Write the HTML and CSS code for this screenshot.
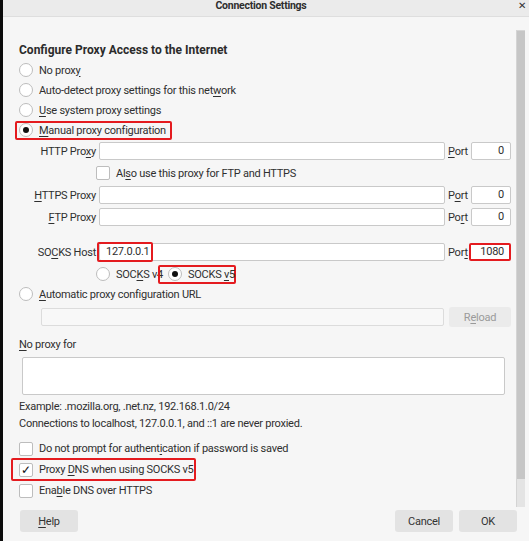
FILE: index.html
```html
<!DOCTYPE html>
<html>
<head lang="en">
    <meta charset="UTF-8">
    <title>Connection Settings</title>
    <link rel="stylesheet" href="styles.css">
</head>
<body>
<div class="screen">
    <div class="edge"></div>
    <div class="dialog">
        <div class="titlebar">
            <span class="title">Connection Settings</span>
            <span class="close">&#x2715;</span>
        </div>
        <div class="scroller">
            <div class="pane">
                <h1>Configure Proxy Access to the Internet</h1>
                <div class="choices">
                    <div class="opt"><span class="radio"></span><span>No prox<u>y</u></span></div>
                    <div class="opt"><span class="radio"></span><span>Auto-detect proxy settings for this net<u>w</u>ork</span></div>
                    <div class="opt"><span class="radio"></span><span><u>U</u>se system proxy settings</span></div>
                    <div class="opt"><span class="mark mark-manual"><span class="radio on"></span><span><u>M</u>anual proxy configuration</span></span></div>
                </div>

                <!-- host / port grid for the manual setup -->
                <div class="manual">
                    <span class="lbl">HTTP Pro<u>x</u>y</span>
                    <span class="field"></span>
                    <span class="plbl"><u>P</u>ort</span>
                    <span class="field num">0</span>

                    <div class="opt also"><span class="check"></span><span>Al<u>s</u>o use this proxy for FTP and HTTPS</span></div>

                    <span class="lbl"><u>H</u>TTPS Proxy</span>
                    <span class="field"></span>
                    <span class="plbl">P<u>o</u>rt</span>
                    <span class="field num">0</span>

                    <span class="lbl"><u>F</u>TP Proxy</span>
                    <span class="field"></span>
                    <span class="plbl">Po<u>r</u>t</span>
                    <span class="field num">0</span>

                    <div class="gap"></div>

                    <span class="lbl">SO<u>C</u>KS Host</span>
                    <span class="field host"><span class="mark mark-host"></span>127.0.0.1</span>
                    <span class="plbl">Por<u>t</u></span>
                    <span class="field num marked">1080</span>

                    <div class="versions">
                        <div class="opt v4"><span class="radio"></span><span>SOC<u>K</u>S v4</span></div>
                        <div class="opt"><span class="mark mark-v5"><span class="radio on"></span><span>SOCKS <u>v</u>5</span></span></div>
                    </div>
                </div>

                <div class="opt auto"><span class="radio"></span><span><u>A</u>utomatic proxy configuration URL</span></div>
                <div class="url-row">
                    <span class="field off"></span>
                    <span class="btn off">R<u>e</u>load</span>
                </div>

                <div class="noproxy"><u>N</u>o proxy for</div>
                <div class="area"></div>
                <p class="hint first">Example: .mozilla.org, .net.nz, 192.168.1.0/24</p>
                <p class="hint">Connections to localhost, 127.0.0.1, and ::1 are never proxied.</p>

                <div class="checks">
                    <div class="opt"><span class="check"></span><span>Do not prompt for authent<u>i</u>cation if password is saved</span></div>
                    <div class="opt"><span class="mark mark-dns"><span class="check on">&#x2713;</span><span>Proxy <u>D</u>NS when using SOCKS v5</span></span></div>
                    <div class="opt"><span class="check"></span><span>Ena<u>b</u>le DNS over HTTPS</span></div>
                </div>
            </div>
            <div class="scrollbar"><div class="thumb"></div></div>
        </div>
        <div class="buttons">
            <span class="btn"><u>H</u>elp</span>
            <span class="spacer"></span>
            <span class="btn">Cancel</span>
            <span class="btn">OK</span>
        </div>
    </div>
</div>
</body>
</html>
```

FILE: styles.css
```css
*{
    margin: 0;
    padding: 0;
    box-sizing: border-box;
}
html, body{
    width: 529px;
    height: 541px;
    overflow: hidden;
    background: #000;
}
body{
    font-family: Roboto, "Noto Sans", sans-serif;
    font-size: 11px;
    letter-spacing: -0.25px;
    color: #2f2f2f;
}
u{
    text-decoration-thickness: 1px;
    text-underline-offset: 2px;
}
.screen{
    display: flex;
    height: 541px;
}
.edge{
    width: 3px;
    background: #0b0b0b;
}
.dialog{
    flex: 1;
    display: flex;
    flex-direction: column;
    background: #f6f6f6;
}

/* title bar */
.titlebar{
    height: 17px;
    padding-right: 10px;
    background: #ebebeb;
    border-bottom: 1px solid #dedede;
    position: relative;
    text-align: center;
}
.title{
    display: block;
    font-weight: bold;
    font-size: 10.5px;
    line-height: 12px;
    color: #2e2e2e;
}
.close{
    position: absolute;
    right: 3px;
    top: 0;
    font-size: 10px;
    line-height: 12px;
    color: #333;
}

/* scroll area */
.scroller{
    height: 490px;
    display: flex;
}
.pane{
    flex: 1;
    padding: 24px 0 0 16px;
}
.scrollbar{
    width: 9px;
    margin: 13px 4px 0 5px;
    height: 477px;
    background: #e4e4e4;
    border-left: 1px solid #d4d4d4;
}
.thumb{
    height: 449px;
    background: #c6c6c6;
    border-top: 1px solid #d6d6d6;
}

h1{
    font-size: 12px;
    font-weight: bold;
    line-height: 19px;
    letter-spacing: 0;
    color: #2b2b2b;
}

/* radios and checkboxes */
.opt{
    display: flex;
    align-items: center;
    height: 20px;
    white-space: nowrap;
}
.radio, .check{
    width: 14px;
    height: 14px;
    border: 1px solid #bdbdbd;
    background: #fff;
    margin-right: 6px;
    flex: none;
    display: flex;
    align-items: center;
    justify-content: center;
}
.radio{
    border-radius: 50%;
}
.radio.on::after{
    content: "";
    width: 6px;
    height: 6px;
    border-radius: 50%;
    background: #111;
}
.check{
    border-radius: 2px;
}
.check.on{
    font-size: 12px;
    line-height: 12px;
    color: #111;
}

/* red highlight boxes */
.mark{
    display: flex;
    align-items: center;
    border: 2px solid #e41b1f;
    border-radius: 2px;
}
.mark-manual{
    margin-left: -4px;
    padding: 0 4px 0 2px;
    height: 19px;
    width: 157px;
}
.mark-v5{
    padding: 0 6px 0 8px;
    height: 19px;
    width: 78px;
}
.mark-dns{
    margin-left: -8px;
    padding: 0 4px 0 6px;
    height: 23px;
    width: 185px;
}

/* manual proxy grid */
.manual{
    display: grid;
    grid-template-columns: 77px 346px 20px 40px;
    grid-template-rows: 18px 18px 18px 18px 9px 18px 18px;
    column-gap: 3px;
    row-gap: 4px;
    align-items: center;
    margin-top: 2px;
}
.gap{
    grid-column: 1 / -1;
}
.lbl{
    text-align: right;
    white-space: nowrap;
}
.plbl{
    white-space: nowrap;
}
.field{
    display: block;
    height: 18px;
    background: #fff;
    border: 1px solid #c9c9c9;
    border-radius: 2px;
    line-height: 16px;
    padding: 0 6px;
    white-space: nowrap;
}
.field.num{
    text-align: right;
}
.field.host{
    position: relative;
}
.mark-host{
    position: absolute;
    left: -3px;
    top: -2px;
    width: 56px;
    height: 20px;
}
.field.marked{
    border: 2px solid #e41b1f;
    line-height: 14px;
    margin-left: -2px;
    padding-right: 5px;
}
.also{
    grid-column: 2 / 5;
    margin-left: -3px;
    height: 18px;
}
.versions{
    grid-column: 2 / 5;
    margin-left: -3px;
    display: flex;
    align-items: center;
    height: 18px;
}
.versions .opt{
    height: 19px;
}
.opt.v4{
    width: 62px;
}

.auto{
    margin-top: 1px;
}
.url-row{
    display: flex;
    align-items: center;
    gap: 5px;
    height: 20px;
    margin: 3px 0 0 22px;
}
.url-row .field{
    width: 403px;
}
.field.off{
    background: #f8f8f8;
    border-color: #dcdcdc;
}

/* buttons */
.btn{
    display: flex;
    align-items: center;
    justify-content: center;
    width: 58px;
    height: 22px;
    background: #e3e3e3;
    border-radius: 3px;
    color: #333;
}
.btn.off{
    width: 62px;
    height: 20px;
    background: #ebebeb;
    color: #9a9a9a;
}

.noproxy{
    margin-top: 9px;
    height: 18px;
    line-height: 18px;
}
.area{
    width: 483px;
    height: 38px;
    margin: 3px 0 0 3px;
    background: #fff;
    border: 1px solid #c9c9c9;
    border-radius: 2px;
}
.hint{
    height: 17px;
    line-height: 17px;
}
.hint.first{
    margin-top: 3px;
}
.checks{
    margin-top: 6px;
}
.checks .opt{
    height: 21px;
}

.buttons{
    flex: 1;
    display: flex;
    gap: 6px;
    padding: 3px 12px 0 17px;
}
.spacer{
    flex: 1;
}
```
